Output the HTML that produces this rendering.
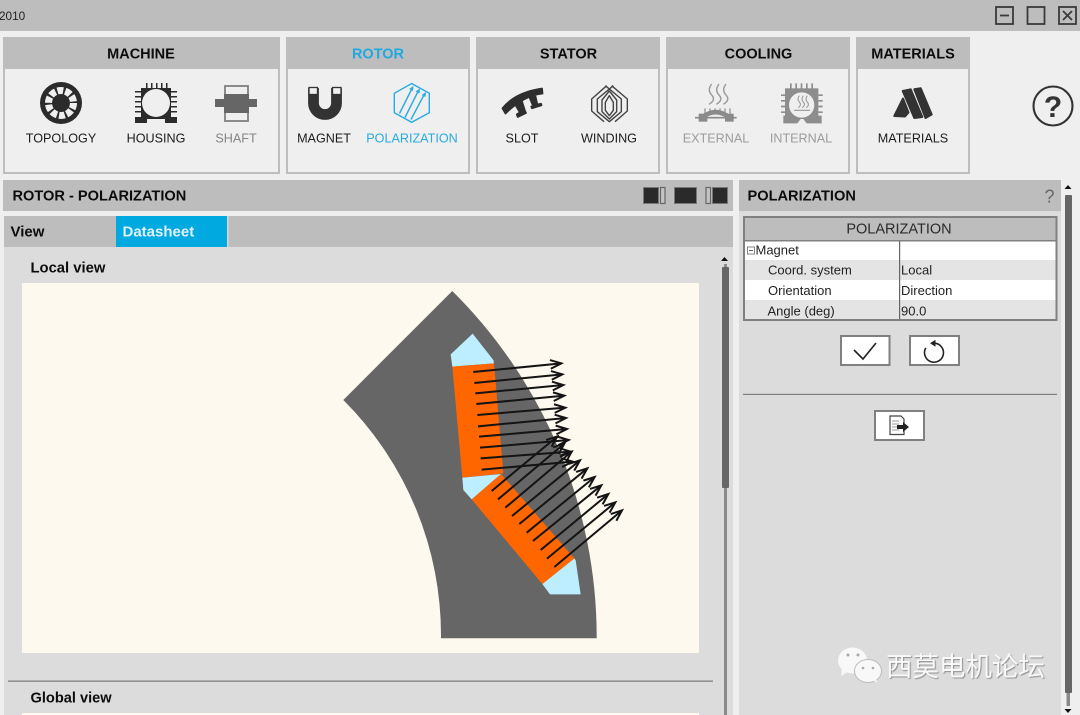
<!DOCTYPE html>
<html><head><meta charset="utf-8"><style>
html,body{margin:0;padding:0;background:#efefef;width:1080px;height:715px;overflow:hidden}
svg{display:block;position:absolute;left:0;top:0;filter:blur(.3px)}
text{font-family:"Liberation Sans",sans-serif;fill:#222}
.h{font-size:14.5px;font-weight:bold;text-anchor:middle;fill:#0c0c0c}
.l{font-size:12.6px;text-anchor:middle;fill:#1c1c1c}
.g{fill:#858585}.gl{fill:#9c9c9c}.b{fill:#29abe2}
.t{font-size:13px;fill:#222}
.s{font-size:14.6px;font-weight:bold;fill:#0c0c0c}
.wm{position:absolute;left:886px;top:650px;font-family:"Liberation Sans","Noto Sans CJK SC",sans-serif;font-size:26.5px;line-height:34px;color:#f9f9f9;text-shadow:1px 1px 1px #8f8f8f;white-space:nowrap}
</style></head><body>
<svg width="1080" height="715" viewBox="0 0 1080 715" xmlns="http://www.w3.org/2000/svg">
<defs>
<marker id="ah" markerUnits="userSpaceOnUse" markerWidth="44" markerHeight="38" refX="36" refY="19" orient="auto"><path d="M3 6L36 19L3 32" fill="none" stroke="#141414" stroke-width="6"/></marker>
</defs>
<rect width="1080" height="715" fill="#efefef"/>
<!-- title bar -->
<rect width="1080" height="31" fill="#bdbdbd"/>
<text x="-1" y="20" style="font-size:11.800px">2010</text>
<g fill="none" stroke="#3a3a3a" stroke-width="1.800">
<rect x="996" y="7" width="17" height="17"/><path d="M1000 15.500h9"/>
<rect x="1027.500" y="7" width="17" height="17"/>
<rect x="1059" y="7" width="17" height="17"/><path d="M1063 11l9 9M1072 11l-9 9"/>
</g>
<!-- ribbon panels -->
<g fill="#efefef" stroke="#bdbdbd" stroke-width="2">
<rect x="4" y="38" width="275" height="135"/>
<rect x="287" y="38" width="182" height="135"/>
<rect x="477" y="38" width="182" height="135"/>
<rect x="667" y="38" width="182" height="135"/>
<rect x="857" y="38" width="112" height="135"/>
</g>
<g fill="#bdbdbd">
<rect x="3" y="37" width="277" height="32"/>
<rect x="286" y="37" width="184" height="32"/>
<rect x="476" y="37" width="184" height="32"/>
<rect x="666" y="37" width="184" height="32"/>
<rect x="856" y="37" width="114" height="32"/>
</g>
<text class="h" x="141" y="58.500">MACHINE</text>
<text class="h" x="378" y="58.500" style="fill:#1fa9e0">ROTOR</text>
<text class="h" x="568.500" y="58.500">STATOR</text>
<text class="h" x="758.500" y="58.500">COOLING</text>
<text class="h" x="913" y="58.500">MATERIALS</text>
<text class="l" x="61" y="142.500">TOPOLOGY</text>
<text class="l" x="156" y="142.500">HOUSING</text>
<text class="l g" x="236" y="142.500">SHAFT</text>
<text class="l" x="324" y="142.500">MAGNET</text>
<text class="l b" x="412" y="142.500">POLARIZATION</text>
<text class="l" x="522" y="142.500">SLOT</text>
<text class="l" x="609" y="142.500">WINDING</text>
<text class="l gl" x="716" y="142.500">EXTERNAL</text>
<text class="l gl" x="801" y="142.500">INTERNAL</text>
<text class="l" x="913" y="142.500">MATERIALS</text>
<!-- topology -->
<circle cx="61" cy="103" r="21" fill="#2b2b2b"/>
<circle cx="61" cy="103" r="12.500" fill="none" stroke="#efefef" stroke-width="7" stroke-dasharray="5.850 2"/>
<circle cx="61" cy="103" r="7.500" fill="#2b2b2b"/>
<!-- housing -->
<g fill="#2b2b2b">
<rect x="141" y="88" width="30" height="31"/>
<path d="M135 123v-6h12v6zM165 123v-6h12v6z"/>
<path d="M135 91h6v1.500h-6zM135 96h6v1.500h-6zM135 101h6v1.500h-6zM135 106h6v1.500h-6zM135 111h6v1.500h-6zM171 91h6v1.500h-6zM171 96h6v1.500h-6zM171 101h6v1.500h-6zM171 106h6v1.500h-6zM171 111h6v1.500h-6zM146 83h1.500v6h-1.500zM151 83h1.500v6h-1.500zM156 83h1.500v6h-1.500zM161 83h1.500v6h-1.500zM166 83h1.500v6h-1.500z"/>
</g>
<circle cx="156" cy="103" r="14" fill="#efefef"/>
<rect x="147" y="119" width="18" height="5" fill="#efefef"/>
<!-- shaft -->
<rect x="225" y="86" width="23" height="35" fill="none" stroke="#808080" stroke-width="1.800"/>
<rect x="224" y="94" width="25" height="19" fill="#666"/>
<rect x="215" y="99" width="42" height="8" fill="#666"/>
<!-- magnet -->
<path d="M313.500 88V103a11.500 11.500 0 0 0 23 0V88" fill="none" stroke="#333" stroke-width="10.800"/>
<rect x="309" y="87.500" width="8.500" height="7" fill="#efefef" stroke="#333" stroke-width="1.300"/>
<rect x="332.500" y="87.500" width="8.500" height="7" fill="#efefef" stroke="#333" stroke-width="1.300"/>
<!-- polarization -->
<g fill="none" stroke="#29abe2" stroke-width="1.400">
<path d="M411.700 83.500L429.300 93.300V112.700L411.700 122.300L394.300 112.700V93.300Z"/>
<path d="M399.500 113.500L412 88.500M405 117.500L418.500 90.500M411 119.500L424.500 94"/>
</g>
<path d="M413.500 86l-.5 5-4-2zM420 88.500l-.5 5-4-2zM426 92l-.5 5-4-2z" fill="#29abe2"/>
<!-- slot -->
<g fill="#2e2e2e" stroke="#2e2e2e" stroke-width="1.800" stroke-linejoin="round">
<path d="M502.500 108.300Q515 92.500 542 88.500L542.500 93.500Q523.300 95.700 505.500 113.500Z"/>
<path d="M515.500 105L521.700 100.500L525 111L526 113L517.800 117L516.800 114.500L519.800 112.300Z"/>
<path d="M529.800 98L535.500 96.500L537.300 104.500L541 103.800L541.500 105.300L532 108.300L531.300 106.700L533 105.700Z"/>
</g>
<!-- winding -->
<g transform="translate(480 75) scale(.33333)" fill="none" stroke="#444" stroke-width="4.200" stroke-linejoin="round">
<path d="M380 32L335 72V108L372 140"/>
<path d="M395 32L442 72V108L405 140"/>
<path d="M400 32L352 72V110L388 140L424 110V72L376 32"/>
<path d="M388 48L410 75V110L388 132L366 110V75Z"/>
<path d="M388 62L376 82V106L388 122L400 106V82Z"/>
</g>
<!-- external -->
<g transform="translate(670 75) scale(.33333)">
<g fill="none" stroke="#9a9a9a" stroke-width="4.200">
<path d="M125 27q-14 18 0 33t-8 28M147 27q-14 18 0 33t-8 28M168 27q-14 18 0 33t-8 28"/>
<path d="M105 100v16M120 100v16M135 100v14M150 100v14M165 100v16M180 100v16"/>
</g>
<path d="M97 127Q137 96 178 127" fill="none" stroke="#8a8a8a" stroke-width="14"/>
<rect x="86" y="116" width="26" height="24" fill="#8a8a8a"/>
<rect x="165" y="116" width="26" height="24" fill="#8a8a8a"/>
<path d="M75 128H200" stroke="#8a8a8a" stroke-width="5"/>
</g>
<!-- internal -->
<g transform="translate(670 75) scale(.33333)">
<g fill="#8d8d8d">
<rect x="345" y="40" width="100" height="92"/>
<path d="M340 145V122H455V145H410L400 132H392L382 145Z"/>
<path d="M333 58h12v5h-12zM333 75h12v5h-12zM333 92h12v5h-12zM333 109h12v5h-12zM445 58h13v5h-13zM445 75h13v5h-13zM445 92h13v5h-13zM445 109h13v5h-13zM360 25h5v16h-5zM376 25h5v16h-5zM392 25h5v16h-5zM408 25h5v16h-5zM424 25h5v16h-5z"/>
</g>
<circle cx="395" cy="90" r="38" fill="#efefef"/>
<path d="M388 62q-8 10 0 19t-3 17M400 62q-8 10 0 19t-3 17M412 62q-8 10 0 19t-3 17M372 106H420" fill="none" stroke="#9a9a9a" stroke-width="3.200"/>
</g>
<!-- materials -->
<g fill="#333" stroke="#333" stroke-width="2" stroke-linejoin="round">
<path d="M894.300 116L903 98.500L908.500 112.500L905 116.500Z"/>
<path d="M902.700 91L910.700 89.300L922.300 117L914.300 118Z"/>
<path d="M914.300 89.300L920.700 88.300L931.700 114.500L925.500 118Z"/>
</g>
<!-- help -->
<circle cx="1053" cy="106" r="19.500" fill="none" stroke="#333" stroke-width="2.100"/>
<text x="1053" y="117" text-anchor="middle" style="font-size:30px;font-weight:bold;fill:#333">?</text>

<!-- left main -->
<rect x="3" y="180" width="730" height="31" fill="#bdbdbd"/>
<text class="s" x="12.500" y="200.500">ROTOR - POLARIZATION</text>
<g fill="#2a2a2a" stroke="#777" stroke-width="1">
<rect x="643.500" y="187.500" width="15" height="16"/>
<rect x="674.500" y="187.500" width="22" height="16"/>
<rect x="712.500" y="187.500" width="15" height="16"/>
</g>
<g fill="#c4c4c4" stroke="#666" stroke-width="1.200">
<rect x="660.500" y="187.500" width="4.500" height="16"/>
<rect x="706" y="187.500" width="4.500" height="16"/>
</g>
<rect x="4" y="216" width="729" height="31" fill="#bdbdbd"/>
<rect x="116" y="216" width="111" height="31" fill="#00aae0"/>
<rect x="227" y="216" width="1.500" height="31" fill="#d8d8d8"/>
<text class="s" x="10.500" y="236.500" style="font-size:15px">View</text>
<text class="s" x="122.500" y="236.500" style="fill:#e2f0f7;font-size:15px">Datasheet</text>
<rect x="4" y="247" width="729" height="468" fill="#dcdcdc"/>
<text class="s" x="30.500" y="272.500" style="font-size:14.800px">Local view</text>
<rect x="22" y="283" width="677" height="370" fill="#fef9ee"/>
<rect x="8" y="680.500" width="705" height="1.300" fill="#808080"/>
<text class="s" x="30.500" y="702.500">Global view</text>
<rect x="22" y="713" width="677" height="2" fill="#fef9ee"/>
<!-- left scrollbar -->
<path d="M721 261l3.500-4 3.500 4z" fill="#111"/>
<rect x="724" y="264" width="3" height="451" fill="#8a8a8a"/>
<rect x="722" y="267" width="7" height="221" rx="1" fill="#666"/>
<!-- rotor -->
<path d="M452.300 291A487.800 487.800 0 0 1 596.700 638.300H441A332.500 332.500 0 0 0 343.300 400Z" fill="#666"/>
<g transform="translate(340 285) scale(.33333)">
<path d="M398 146L460 225L462 235L337 245L332 208Z" fill="#bdeeff"/>
<path d="M367 578L483 567L395 643L370 615Z" fill="#bdeeff"/>
<path d="M703 820L707 826L722 928H630L607 897Z" fill="#bdeeff"/>
<path d="M337 245L462 235L490 565L367 578Z" fill="#f60"/>
<path d="M395 643L483 567L703 820L607 897Z" fill="#f60"/>
<g stroke="#141414" stroke-width="6" fill="none" marker-end="url(#ah)">
<path d="M400 261L664 235"/>
<path d="M403 294L667 268"/>
<path d="M406 325L670 300"/>
<path d="M409 357L673 332"/>
<path d="M412 390L676 368"/>
<path d="M414 424L678 399"/>
<path d="M417 455L681 432"/>
<path d="M420 488L686 465"/>
<path d="M422 520L692 500"/>
<path d="M425 554L698 530"/>
<path d="M455 618L652 454"/>
<path d="M474 643L673 476"/>
<path d="M496 668L695 500"/>
<path d="M516 693L720 526"/>
<path d="M538 717L742 550"/>
<path d="M560 743L764 576"/>
<path d="M579 768L784 601"/>
<path d="M602 795L805 627"/>
<path d="M621 821L826 652"/>
<path d="M643 846L846 676"/>
</g>
</g>

<!-- right panel -->
<rect x="739" y="180" width="322" height="535" fill="#dcdcdc"/>
<rect x="739" y="180" width="322" height="31" fill="#bdbdbd"/>
<text class="s" x="747.500" y="200.500">POLARIZATION</text>
<text x="1049.500" y="202.500" text-anchor="middle" style="font-size:18px;fill:#666">?</text>
<rect x="744" y="217" width="312.500" height="103" fill="#fff" stroke="#808080" stroke-width="2"/>
<rect x="745" y="218" width="310.500" height="22" fill="#bdbdbd"/>
<rect x="745" y="240" width="310.500" height="1.500" fill="#808080"/>
<rect x="745" y="260" width="310.500" height="20" fill="#e4e4e4"/>
<rect x="745" y="300" width="310.500" height="19" fill="#e4e4e4"/>
<rect x="899" y="241" width="1.200" height="78" fill="#666"/>
<text x="899" y="233.500" text-anchor="middle" style="font-size:14.500px;fill:#2a2a2a">POLARIZATION</text>
<rect x="747.500" y="247" width="7" height="7" fill="none" stroke="#777" stroke-width=".9"/>
<path d="M749 250.500h4" stroke="#555" stroke-width=".9"/>
<text class="t" x="755.500" y="254.500">Magnet</text>
<text class="t" x="768" y="274.500">Coord. system</text>
<text class="t" x="768" y="295">Orientation</text>
<text class="t" x="767.500" y="315.500">Angle (deg)</text>
<text class="t" x="901" y="274.500">Local</text>
<text class="t" x="901" y="295">Direction</text>
<text class="t" x="901" y="315.500">90.0</text>
<g fill="#fff" stroke="#808080" stroke-width="2">
<rect x="841" y="336" width="48.500" height="29"/>
<rect x="910" y="336" width="49" height="29"/>
<rect x="875" y="411" width="49" height="29"/>
</g>
<path d="M854 350l9 9 13-16" fill="none" stroke="#222" stroke-width="1.600"/>
<path d="M934 343.200a9.500 9.500 0 1 1-8.200 4.700" fill="none" stroke="#222" stroke-width="1.600"/>
<path d="M935.500 339.800v7l-5.500-3.500z" fill="#222"/>
<rect x="743" y="393.800" width="314" height="1.200" fill="#808080"/>
<path d="M890 416h11l3 3v15.500h-14z" fill="#fff" stroke="#444" stroke-width="1.200"/>
<path d="M892 421h7M892 424h7M892 427h7M892 430h7" stroke="#999" stroke-width="1"/>
<path d="M897 425h6v-3l6 5-6 5v-3h-6z" fill="#222"/>
<!-- right scrollbar -->
<path d="M1064.500 189l3.500-4 3.500 4z" fill="#111"/>
<path d="M1064.500 709l3.500 4 3.500-4z" fill="#111"/>
<rect x="1066.500" y="690" width="3.500" height="16" fill="#8a8a8a"/>
<rect x="1065" y="195" width="7" height="498" rx="1" fill="#666"/>
<!-- watermark -->
<ellipse cx="852.500" cy="660.500" rx="14.500" ry="13" fill="#f8f8f8"/>
<path d="M842 668l-1 8 8-5z" fill="#f8f8f8"/>
<ellipse cx="868" cy="671" rx="13.500" ry="11.500" fill="#f8f8f8" stroke="#bdbdbd" stroke-width="1"/>
<path d="M873 680l4 3-1-6z" fill="#f8f8f8"/>
<circle cx="848" cy="655" r="1.500" fill="#aaa"/><circle cx="858" cy="655" r="1.500" fill="#aaa"/>
<circle cx="863" cy="668" r="1.300" fill="#aaa"/><circle cx="873" cy="668" r="1.300" fill="#aaa"/>
</svg>
<div class="wm">西莫电机论坛</div>
</body></html>
